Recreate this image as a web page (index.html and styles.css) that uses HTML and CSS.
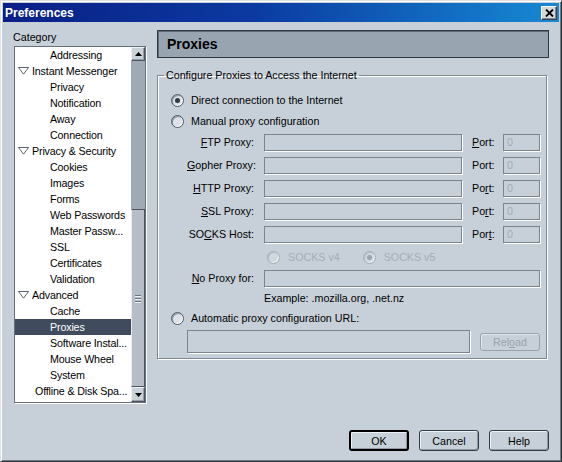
FILE: index.html
```html
<!DOCTYPE html>
<html>
<head>
<meta charset="utf-8">
<title>Preferences</title>
<link rel="stylesheet" href="styles.css">
</head>
<body>
<div class="window">
  <div class="titlebar">
    <span class="title">Preferences</span>
    <span class="close"><svg width="9" height="8" viewBox="0 0 9 8"><path d="M1 0.5 L8 7.5 M8 0.5 L1 7.5" stroke="#000" stroke-width="1.8"/></svg></span>
  </div>
  <div class="main">
    <div class="leftcol">
      <div class="cat-label">Category</div>
      <div class="tree">
        <ul class="items">
          <li class="child">Addressing</li>
          <li class="parent"><svg class="twisty" width="11" height="8" viewBox="0 0 11 8"><path d="M0.5 0.5 H10.5 L5.5 7.2 Z" fill="#fff" stroke="#59636e" stroke-width="1"/></svg>Instant Messenger</li>
          <li class="child">Privacy</li>
          <li class="child">Notification</li>
          <li class="child">Away</li>
          <li class="child">Connection</li>
          <li class="parent"><svg class="twisty" width="11" height="8" viewBox="0 0 11 8"><path d="M0.5 0.5 H10.5 L5.5 7.2 Z" fill="#fff" stroke="#59636e" stroke-width="1"/></svg>Privacy &amp; Security</li>
          <li class="child">Cookies</li>
          <li class="child">Images</li>
          <li class="child">Forms</li>
          <li class="child">Web Passwords</li>
          <li class="child">Master Passw...</li>
          <li class="child">SSL</li>
          <li class="child">Certificates</li>
          <li class="child">Validation</li>
          <li class="parent"><svg class="twisty" width="11" height="8" viewBox="0 0 11 8"><path d="M0.5 0.5 H10.5 L5.5 7.2 Z" fill="#fff" stroke="#59636e" stroke-width="1"/></svg>Advanced</li>
          <li class="child">Cache</li>
          <li class="child selected">Proxies</li>
          <li class="child">Software Instal...</li>
          <li class="child">Mouse Wheel</li>
          <li class="child">System</li>
          <li class="top">Offline &amp; Disk Spa...</li>
        </ul>
        <div class="scrollbar">
          <div class="sb-btn up"><svg width="7" height="4" viewBox="0 0 7 4"><path d="M0 4 L3.5 0 L7 4 Z" fill="#000"/></svg></div>
          <div class="sb-track"></div>
          <div class="sb-thumb"><span class="grip"></span><span class="grip"></span><span class="grip"></span></div>
          <div class="sb-btn down"><svg width="7" height="4" viewBox="0 0 7 4"><path d="M0 0 L7 0 L3.5 4 Z" fill="#000"/></svg></div>
        </div>
      </div>
    </div>
    <div class="rightcol">
      <div class="header">Proxies</div>
      <fieldset class="group">
        <legend>Configure Proxies to Access the Internet</legend>
        <div class="radio-row">
          <span class="radio checked"><span class="dot"></span></span>
          <span>Direct connection to the Internet</span>
        </div>
        <div class="radio-row second">
          <span class="radio"></span>
          <span>Manual proxy configuration</span>
        </div>
        <div class="proxy-grid">
          <label class="lbl"><u>F</u>TP Proxy:</label><span class="field"></span><label class="plbl"><u>P</u>ort:</label><span class="field port">0</span>
          <label class="lbl"><u>G</u>opher Proxy:</label><span class="field"></span><label class="plbl">Port:</label><span class="field port">0</span>
          <label class="lbl"><u>H</u>TTP Proxy:</label><span class="field"></span><label class="plbl">Po<u>r</u>t:</label><span class="field port">0</span>
          <label class="lbl"><u>S</u>SL Proxy:</label><span class="field"></span><label class="plbl">Po<u>r</u>t:</label><span class="field port">0</span>
          <label class="lbl">SO<u>C</u>KS Host:</label><span class="field"></span><label class="plbl">Por<u>t</u>:</label><span class="field port">0</span>
        </div>
        <div class="socks-row">
          <span class="radio disabled"></span>
          <span class="dis v4">SOCKS v4</span>
          <span class="radio disabled checked"><span class="dot"></span></span>
          <span class="dis">SOCKS v5</span>
        </div>
        <div class="noproxy-row">
          <label class="lbl"><u>N</u>o Proxy for:</label><span class="field wide"></span>
        </div>
        <div class="example">Example: .mozilla.org, .net.nz</div>
        <div class="radio-row auto">
          <span class="radio"></span>
          <span>Automatic proxy configuration URL:</span>
        </div>
        <div class="url-row">
          <span class="field url"></span>
          <span class="btn reload">Rel<u>o</u>ad</span>
        </div>
      </fieldset>
    </div>
  </div>
  <div class="footer">
    <span class="btn default">OK</span>
    <span class="btn">Cancel</span>
    <span class="btn">Help</span>
  </div>
</div>
</body>
</html>
```
FILE: styles.css
```css
* { box-sizing: border-box; }
html, body { margin: 0; padding: 0; }
body {
  width: 562px;
  height: 462px;
  overflow: hidden;
  font-family: "Liberation Sans", Arial, sans-serif;
  font-size: 10.7px;
  color: #000;
  background: #c7d0d9;
}
.window {
  width: 562px;
  height: 462px;
  display: flex;
  flex-direction: column;
  background: #c7d0d9;
  border: 1px solid;
  border-color: #dfe3e8 #2f363d #2f363d #dfe3e8;
  box-shadow: inset 1px 1px 0 #fff, inset -1px -1px 0 #6f7881;
  padding: 2px;
}
.titlebar {
  height: 19px;
  flex: none;
  display: flex;
  align-items: center;
  justify-content: space-between;
  padding: 0 2px 0 2px;
  background: linear-gradient(to right, #0a1f86 0%, #0b3aa0 45%, #1689d4 100%);
}
.title {
  color: #fff;
  font-weight: bold;
  font-size: 12px;
}
.close {
  width: 16px;
  height: 14px;
  display: flex;
  align-items: center;
  justify-content: center;
  background: #d4d8dc;
  border: 1px solid;
  border-color: #fff #404040 #404040 #fff;
  box-shadow: inset -1px -1px 0 #808890;
}
.main {
  flex: 1;
  display: flex;
  padding: 0 0 0 10px;
}
.leftcol {
  width: 134px;
  flex: none;
}
.cat-label {
  margin-top: 9px;
  height: 13px;
  line-height: 13px;
}
.tree {
  margin: 2px 0 0 1px;
  width: 132px;
  height: 357px;
  border: 1px solid #66707b;
  box-shadow: 1px 1px 0 #fff;
  display: flex;
}
.items {
  list-style: none;
  margin: 0;
  padding: 0;
  width: 116px;
  background: #fff;
}
.items li {
  height: 16px;
  line-height: 16px;
  white-space: nowrap;
  overflow: hidden;
  display: flex;
  align-items: center;
  letter-spacing: -0.15px;
}
.items .child { padding-left: 35px; }
.items .parent { padding-left: 3px; }
.items .top { padding-left: 20px; }
.twisty { margin-right: 3px; flex: none; }
.items .selected {
  background: #404c5e;
  color: #fff;
}
.scrollbar {
  width: 14px;
  display: flex;
  flex-direction: column;
}
.sb-btn {
  display: flex;
  align-items: center;
  justify-content: center;
  background: #c9d1d9;
  border: 1px solid;
  border-color: #eef1f4 #4b5560 #4b5560 #eef1f4;
  box-shadow: inset -1px -1px 0 #949ea8;
}
.sb-btn.up { height: 14px; }
.sb-btn.down { height: 15px; }
.sb-track {
  height: 148px;
  background: #a0aab4;
}
.sb-thumb {
  height: 178px;
  background: #b5bec7;
  border: 1px solid;
  border-color: #4b5560 #4b5560 #4b5560 #e8ecf0;
  display: flex;
  flex-direction: column;
  align-items: center;
  justify-content: center;
  gap: 2px;
}
.grip {
  width: 6px;
  height: 1px;
  background: #6a747e;
  box-shadow: 0 1px 0 #eef1f4;
}
.rightcol {
  width: 392px;
  flex: none;
  margin-left: 10px;
  padding-top: 8px;
}
.header {
  height: 28px;
  padding-left: 9px;
  display: flex;
  align-items: center;
  font-size: 14px;
  font-weight: bold;
  background: #98a4b0;
  border: 1px solid #2e3843;
  box-shadow: inset 1px 1px 0 #5f6b78;
}
.group {
  margin: 10px 0 0 0;
  width: 390px;
  padding: 10px 0 5px 13px;
  border: 1px solid #7d8893;
  box-shadow: 1px 1px 0 #fff, inset 1px 1px 0 #fff;
}
.group legend {
  margin-left: -7px;
  padding: 0 2px;
  line-height: 14px;
  height: 14px;
}
.radio-row {
  height: 16px;
  display: flex;
  align-items: center;
  gap: 7px;
}
.radio-row.second { margin-top: 5px; }
.radio-row.auto { margin-top: 5px; }
.radio {
  width: 13px;
  height: 13px;
  flex: none;
  border-radius: 50%;
  border: 1px solid #4f5965;
  background: #dbe1e7;
  box-shadow: inset 1px 1px 0 #8e98a2, inset -1px -1px 0 #fff;
  display: flex;
  align-items: center;
  justify-content: center;
}
.radio .dot {
  width: 5px;
  height: 5px;
  border-radius: 50%;
  background: #2f3944;
}
.radio.disabled {
  border-color: #a2acb6;
  background: #d0d7de;
  box-shadow: inset 1px 1px 0 #b8c0c8, inset -1px -1px 0 #eef1f4;
}
.radio.disabled .dot { background: #9aa4ae; }
.proxy-grid {
  margin: 5px 0 0 16px;
  display: grid;
  grid-template-columns: 77px 198px 41px 37px;
  grid-auto-rows: 17px;
  row-gap: 6px;
}
.lbl {
  text-align: right;
  padding-right: 10px;
  line-height: 17px;
  white-space: nowrap;
}
.plbl {
  padding-left: 10px;
  line-height: 17px;
}
.field {
  display: block;
  height: 17px;
  border: 1px solid #7a8490;
  box-shadow: 1px 1px 0 #fff;
}
.field.port {
  color: #a0aab4;
  padding-left: 3px;
  line-height: 15px;
}
.socks-row {
  margin: 6px 0 0 96px;
  height: 16px;
  display: flex;
  align-items: center;
  gap: 8px;
}
.dis { color: #a3adb7; }
.dis.v4 { margin-right: 15px; }
.noproxy-row {
  margin: 5px 0 0 16px;
  display: flex;
  height: 17px;
}
.noproxy-row .lbl { width: 77px; }
.field.wide { width: 276px; }
.example {
  margin: 5px 0 0 93px;
  height: 13px;
  line-height: 13px;
}
.url-row {
  margin: 4px 0 0 16px;
  display: flex;
  align-items: center;
  gap: 10px;
}
.field.url {
  width: 283px;
  height: 23px;
}
.btn {
  display: flex;
  align-items: center;
  justify-content: center;
  width: 60px;
  height: 21px;
  border: 1px solid #323c47;
  border-radius: 3px;
  background: #c7d0d9;
  box-shadow: inset 1px 1px 0 #eef1f4, inset -1px -1px 0 #8e98a2;
}
.btn.reload {
  height: 18px;
  color: #98a2ac;
  border-color: #98a2ac;
  box-shadow: inset 1px 1px 0 #e4e9ee;
}
.btn.default {
  border: 2px solid #000;
}
.footer {
  flex: none;
  display: flex;
  justify-content: flex-end;
  gap: 9px;
  padding: 0 10px 8px 0;
  margin-top: auto;
}
.footer .btn + .btn { margin-left: 1px; }
```
